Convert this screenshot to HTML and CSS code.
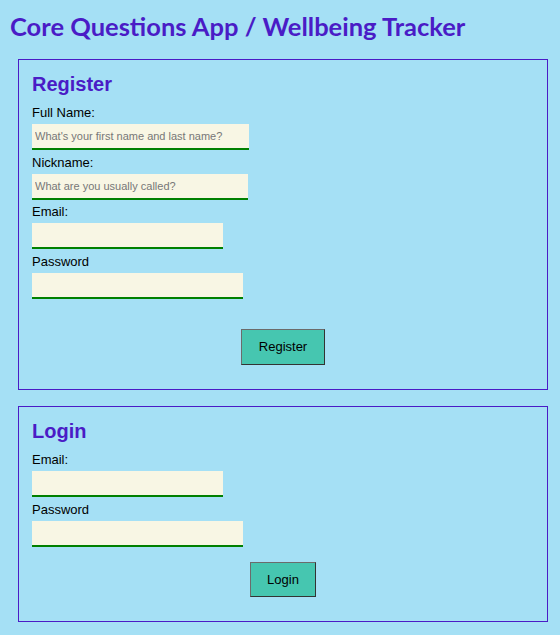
FILE: index.html
```html
<!DOCTYPE html>
<html lang="en">
<head>
<meta charset="utf-8">
<title>Core Questions App / Wellbeing Tracker</title>
<link rel="stylesheet" href="styles.css">
</head>
<body>
<h1 class="title">Core Questions App / Wellbeing Tracker</h1>
<main class="page">
  <form class="card card-register">
    <h2 class="card-title">Register</h2>
    <label class="field-label" for="fullname">Full Name:</label>
    <input class="field w-name" id="fullname" type="text" placeholder="What's your first name and last name?">
    <label class="field-label" for="nickname">Nickname:</label>
    <input class="field w-nick" id="nickname" type="text" placeholder="What are you usually called?">
    <label class="field-label" for="remail">Email:</label>
    <input class="field w-email" id="remail" type="email">
    <label class="field-label" for="rpass">Password</label>
    <input class="field w-pass" id="rpass" type="password">
    <div class="actions actions-register">
      <button class="btn btn-register" type="button">Register</button>
    </div>
  </form>
  <form class="card card-login">
    <h2 class="card-title">Login</h2>
    <label class="field-label" for="lemail">Email:</label>
    <input class="field w-email" id="lemail" type="email">
    <label class="field-label" for="lpass">Password</label>
    <input class="field w-pass" id="lpass" type="password">
    <div class="actions actions-login">
      <button class="btn btn-login" type="button">Login</button>
    </div>
  </form>
</main>
</body>
</html>
```
FILE: styles.css
```css
html, body {
  margin: 0;
  padding: 0;
  background: #a5e0f5;
}
body {
  font-family: "Liberation Sans", Arial, sans-serif;
  color: #000;
}
.title {
  font-family: Lato, "Liberation Sans", sans-serif;
  font-weight: 700;
  font-size: 25.5px;
  line-height: 30px;
  color: #4a1cc6;
  margin: 11px 0 18px 10px;
}
.page {
  display: flex;
  flex-direction: column;
  gap: 16px;
  padding-left: 18px;
}
.card {
  box-sizing: border-box;
  width: 530px;
  border: 1px solid #4a1cc6;
  padding: 13px 13px 24px;
  display: flex;
  flex-direction: column;
  align-items: flex-start;
}
.card-title {
  font-size: 20px;
  line-height: 23px;
  font-weight: 700;
  color: #4a1cc6;
  margin: 0 0 9px;
}
.field-label {
  display: block;
  font-size: 13px;
  line-height: 15px;
}
.field {
  display: block;
  box-sizing: border-box;
  height: 26px;
  margin: 4px 0 4.5px;
  padding: 0 3px;
  border: none;
  border-bottom: 2px solid #008000;
  background: #f8f6e4;
  font-family: "Liberation Sans", Arial, sans-serif;
  font-size: 11px;
  outline: none;
}
.field::placeholder {
  color: #777;
}
.w-name { width: 217px; }
.w-nick { width: 216px; }
.w-email { width: 191px; }
.w-pass { width: 211px; }
.actions {
  align-self: stretch;
  display: flex;
  justify-content: center;
}
.actions-register { margin-top: 26px; }
.actions-login { margin-top: 11px; }
.btn {
  font-family: "Liberation Sans", Arial, sans-serif;
  font-size: 13px;
  line-height: 16px;
  color: #000;
  background: #46c6b0;
  border: 1px solid;
  border-color: #6b6b6b #333 #333 #6b6b6b;
  padding: 9px 16px;
  margin: 0;
}
.btn-register { width: 84px; height: 36px; }
.btn-login { width: 66px; height: 35px; }
```
